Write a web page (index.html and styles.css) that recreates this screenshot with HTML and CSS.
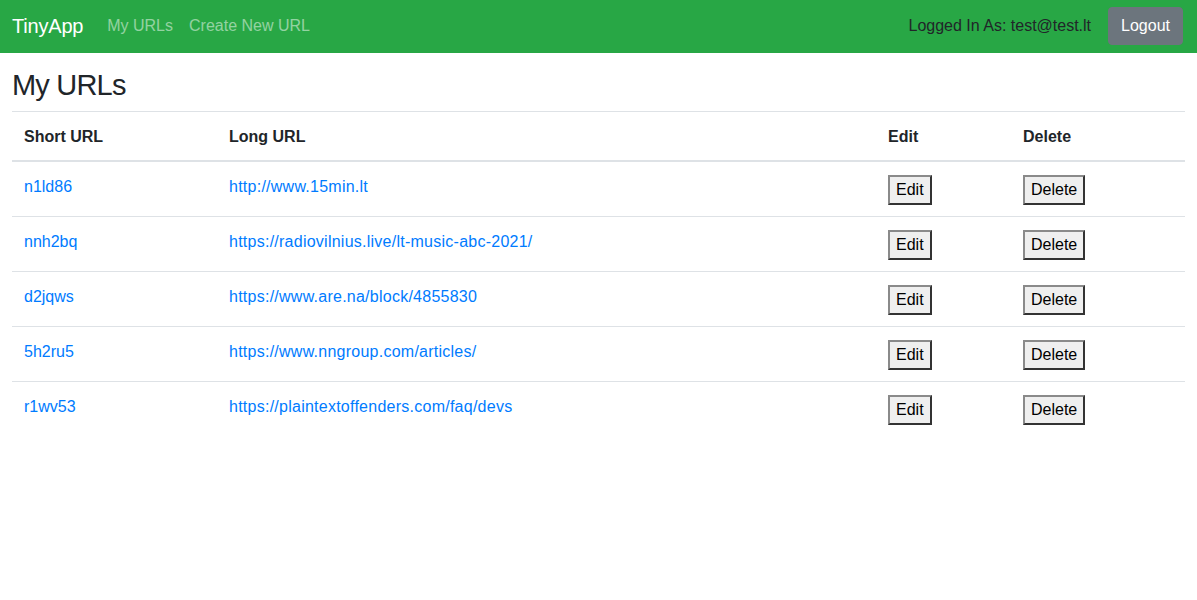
FILE: index.html
```html
<!DOCTYPE html>
<html lang="en">
<head>
<meta charset="utf-8">
<title>TinyApp</title>
<link rel="stylesheet" href="styles.css">
</head>
<body>
<nav class="navbar">
  <div class="nav-left">
    <a class="brand" href="#">TinyApp</a>
    <a class="nav-link" href="#">My URLs</a>
    <a class="nav-link" href="#">Create New URL</a>
  </div>
  <div class="nav-right">
    <span class="user">Logged In As: test@test.lt</span>
    <button class="logout" type="button">Logout</button>
  </div>
</nav>
<main class="container">
  <h2 class="title">My URLs</h2>
  <table class="urls">
    <colgroup>
      <col class="c-short"><col class="c-long"><col class="c-edit"><col class="c-del">
    </colgroup>
    <thead>
      <tr><th>Short URL</th><th>Long URL</th><th>Edit</th><th>Delete</th></tr>
    </thead>
    <tbody>
      <tr><td><a href="#">n1ld86</a></td><td><a class="long" href="#">http://www.15min.lt</a></td><td><button class="btn">Edit</button></td><td><button class="btn">Delete</button></td></tr>
      <tr><td><a href="#">nnh2bq</a></td><td><a class="long" href="#">https://radiovilnius.live/lt-music-abc-2021/</a></td><td><button class="btn">Edit</button></td><td><button class="btn">Delete</button></td></tr>
      <tr><td><a href="#">d2jqws</a></td><td><a class="long" href="#">https://www.are.na/block/4855830</a></td><td><button class="btn">Edit</button></td><td><button class="btn">Delete</button></td></tr>
      <tr><td><a href="#">5h2ru5</a></td><td><a class="long" href="#">https://www.nngroup.com/articles/</a></td><td><button class="btn">Edit</button></td><td><button class="btn">Delete</button></td></tr>
      <tr><td><a href="#">r1wv53</a></td><td><a class="long" href="#">https://plaintextoffenders.com/faq/devs</a></td><td><button class="btn">Edit</button></td><td><button class="btn">Delete</button></td></tr>
    </tbody>
  </table>
</main>
</body>
</html>
```
FILE: styles.css
```css
* { box-sizing: border-box; }
body {
  margin: 0;
  font-family: "Liberation Sans", Arial, sans-serif;
  font-size: 16px;
  line-height: 1.5;
  color: #212529;
  background: #fff;
}
a { text-decoration: none; }

.navbar {
  height: 53px;
  background: #28a745;
  display: flex;
  align-items: center;
  justify-content: space-between;
  padding: 0 14px 0 12px;
}
.nav-left { display: flex; align-items: center; }
.brand {
  color: #fff;
  font-size: 20px;
  line-height: 30px;
  margin-right: 16px;
  letter-spacing: -0.2px;
  margin-top: -2px;
}
.nav-link {
  color: rgba(255, 255, 255, 0.5);
  padding: 8px;
  margin-top: -2px;
}
.nav-right { display: flex; align-items: center; gap: 17px; }
.user { color: #212529; margin-top: -2px; }
.logout {
  font-family: inherit;
  font-size: 16px;
  line-height: 24px;
  color: #fff;
  background: #6c757d;
  border: 1px solid #6c757d;
  border-radius: 4px;
  padding: 6px 12px;
  margin-top: -2px;
}

.container { padding: 12px 12px 0 12px; }
.title {
  font-size: 29px;
  font-weight: 500;
  letter-spacing: -0.8px;
  line-height: 36px;
  margin: 0 0 8px 0;
  padding-top: 2px;
}
.urls {
  width: 100%;
  border-collapse: collapse;
}
.c-short { width: 205px; }
.c-long { width: 659px; }
.c-edit { width: 135px; }
.urls th, .urls td {
  padding: 13px 12px 11px 12px;
  text-align: left;
  vertical-align: top;
  border-top: 1px solid #dee2e6;
}
.urls th {
  font-weight: 700;
  border-bottom: 2px solid #dee2e6;
}
.urls td a { color: #007bff; }
.urls td a.long { letter-spacing: 0.25px; }
.btn {
  font-family: inherit;
  font-size: 16px;
  line-height: 24px;
  color: #000;
  background: #efefef;
  padding: 1px 6px;
  margin: 0;
  border-width: 2px;
  border-style: solid;
  border-color: #8a8a8a #333 #333 #8a8a8a;
}
```
